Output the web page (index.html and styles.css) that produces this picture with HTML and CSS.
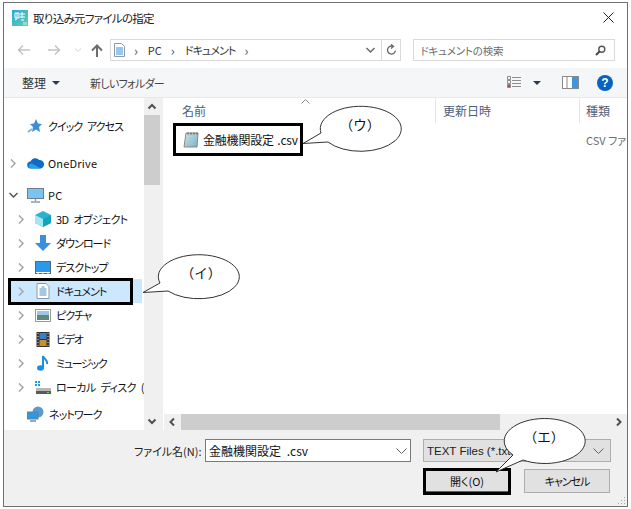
FILE: index.html
```html
<!DOCTYPE html>
<html lang="ja">
<head>
<meta charset="utf-8">
<title>取り込み元ファイルの指定</title>
<link rel="stylesheet" href="styles.css">
</head>
<body>
<div class="window">
  <div class="titlebar">
    <svg class="app-icon" width="16" height="16" viewBox="0 0 16 16"><defs><linearGradient id="ag" x1="0" y1="0" x2="1" y2="1"><stop offset="0" stop-color="#2aa7d8"/><stop offset="1" stop-color="#5fd0b0"/></linearGradient></defs><rect width="16" height="16" fill="url(#ag)"/><path d="M3 3h4v5H3zM5 3v5M8 4h5M8 7h5M10 2v6M3 10l2-1M9 10h3" stroke="#fff" stroke-width="1" fill="none"/><rect x="11" y="12" width="4" height="3" fill="#8fe0c8"/></svg>
    <span class="title-text">取り込み元ファイルの指定</span>
    <svg class="close" width="11" height="11" viewBox="0 0 11 11"><path d="M.5.5l10 10M10.5.5l-10 10" stroke="#222" fill="none"/></svg>
  </div>
  <div class="navrow">
    <svg class="nav" width="14" height="12" viewBox="0 0 14 12"><path d="M13 6H2M6 1.500L1.500 6 6 10.500" stroke="#c4c4c4" stroke-width="1.500" fill="none"/></svg>
    <svg class="nav" width="14" height="12" viewBox="0 0 14 12"><path d="M1 6h11M8 1.500L12.500 6 8 10.500" stroke="#c4c4c4" stroke-width="1.500" fill="none"/></svg>
    <svg class="nav drop" width="8" height="6" viewBox="0 0 8 6"><path d="M1 1.500l3 3 3-3" stroke="#d0d0d0" fill="none"/></svg>
    <svg class="nav up" width="12" height="13" viewBox="0 0 12 13"><path d="M6 13V2M1 6.500L6 1.500l5 5" stroke="#6d6d6d" stroke-width="2" fill="none"/></svg>
    <div class="address">
      <svg class="doc-small" width="11" height="14" viewBox="0 0 11 14"><path d="M.5.500h7l3 3v10H.500z" fill="#fff" stroke="#8a9aa8"/><path d="M2 5h7M2 7h7M2 9h7M2 11h7" stroke="#2f8fd8"/></svg>
      <span class="crumb-sep">›</span><span class="crumb">PC</span><span class="crumb-sep">›</span><span class="crumb kana">ドキュメント</span><span class="crumb-sep">›</span>
      <span class="spacer"></span>
      <svg width="9" height="6" viewBox="0 0 9 6"><path d="M.5 1l4 4 4-4" stroke="#666" stroke-width="1.400" fill="none"/></svg>
      <span class="addr-div"></span>
      <svg class="refresh" width="11" height="12" viewBox="0 0 11 12"><path d="M9.500 6.500a4 4 0 1 1-2.500-4.200M5 .5l2.500 1.800L5 4.500" stroke="#666" stroke-width="1.300" fill="none"/></svg>
    </div>
    <div class="search">
      <span class="search-text">ドキュメントの検索</span>
      <svg width="11" height="11" viewBox="0 0 11 11"><circle cx="6.800" cy="4.200" r="3" fill="none" stroke="#555" stroke-width="1.400"/><path d="M4.500 6.500L1 10" stroke="#444" stroke-width="2"/></svg>
    </div>
  </div>
  <div class="toolbar">
    <span class="tool-label org">整理</span>
    <span class="caret"></span>
    <span class="tool-label newfolder">新しいフォルダー</span>
    <span class="spacer"></span>
    <svg class="views" width="15" height="13" viewBox="0 0 15 13"><path d="M.5.500h3v3h-3zM.5 4.500h3v3h-3zM.5 8.500h3v3h-3z" fill="none" stroke="#8a8a8a"/><path d="M5 1.500h9M5 4.500h9M5 7.500h9M5 10.500h9" stroke="#8f8f8f"/><rect x="1" y="9" width="2" height="2" fill="#d04040"/></svg>
    <span class="caret dark"></span>
    <svg class="pane" width="17" height="13" viewBox="0 0 17 13"><rect x=".5" y=".5" width="16" height="12" fill="#fff" stroke="#8a8a8a"/><rect x="10" y="1" width="6" height="11" fill="#3f96e0"/><path d="M5 1v11" stroke="#8a8a8a"/></svg>
    <span class="help">?</span>
  </div>
  <div class="main">
    <div class="sidebar">
      <div class="tree">
        <div class="row quick"><span class="chev none"></span>
          <svg class="icon" width="16" height="16" viewBox="0 0 16 16"><path d="M9 1l2 4.500 4 .5-3 3 1 5-4-2.500L5 14l1-5-3-3 4-.5z" fill="#3b8fd8"/><path d="M1 14l4-3" stroke="#7ab8e8" stroke-width="2"/></svg>
          <span>クイック アクセス</span></div>
        <div class="row onedrive"><svg class="chev" width="7" height="9" viewBox="0 0 7 9"><path d="M1 .5l4 4-4 4" stroke="#a6a6a6" stroke-width="1.500" fill="none"/></svg>
          <svg class="icon" width="17" height="12" viewBox="0 0 17 12"><path d="M4 11.500a3.500 3.500 0 0 1-.5-7A5 5 0 0 1 12 3a3.500 3.500 0 0 1 1.500 8.500z" fill="#0f6cc4"/><path d="M4 11.500a2.500 2.500 0 0 1 1-5l9 5z" fill="#2a9fe8"/></svg>
          <span class="latin">OneDrive</span></div>
        <div class="row pc"><svg class="chev" width="9" height="7" viewBox="0 0 9 7"><path d="M.5 1l4 4 4-4" stroke="#555" stroke-width="1.500" fill="none"/></svg>
          <svg class="icon" width="17" height="15" viewBox="0 0 17 15"><rect x=".5" y=".5" width="16" height="10" fill="#7cc4f0" stroke="#6d7f8f"/><path d="M8.500 11v2M4 14h9" stroke="#8a9aa8" stroke-width="1.500"/></svg>
          <span class="latin">PC</span></div>
        <div class="row sub"><svg class="chev" width="7" height="9" viewBox="0 0 7 9"><path d="M1 .5l4 4-4 4" stroke="#a6a6a6" stroke-width="1.500" fill="none"/></svg>
          <svg class="icon" width="16" height="16" viewBox="0 0 16 16"><path d="M8 0l8 4v8l-8 4-8-4V4z" fill="#28b4d0"/><path d="M0 4l8 4v8l-8-4z" fill="#a6e6ee"/><path d="M8 8l8-4v8l-8 4z" fill="#1aa0c0"/></svg>
          <span class="mid">3D オブジェクト</span></div>
        <div class="row sub"><svg class="chev" width="7" height="9" viewBox="0 0 7 9"><path d="M1 .5l4 4-4 4" stroke="#a6a6a6" stroke-width="1.500" fill="none"/></svg>
          <svg class="icon" width="16" height="16" viewBox="0 0 16 16"><path d="M5 0h6v8h5l-8 8-8-8h5z" fill="#3a8fdc"/></svg>
          <span>ダウンロード</span></div>
        <div class="row sub"><svg class="chev" width="7" height="9" viewBox="0 0 7 9"><path d="M1 .5l4 4-4 4" stroke="#a6a6a6" stroke-width="1.500" fill="none"/></svg>
          <svg class="icon" width="16" height="13" viewBox="0 0 16 13"><rect width="16" height="11" fill="#2a9ae8"/><rect x=".5" y=".5" width="15" height="12" fill="none" stroke="#4a6a88"/><path d="M2 12h2M7 12h2M12 12h2" stroke="#fff"/></svg>
          <span>デスクトップ</span></div>
        <div class="row sub selected"><svg class="chev" width="7" height="9" viewBox="0 0 7 9"><path d="M1 .5l4 4-4 4" stroke="#a6a6a6" stroke-width="1.500" fill="none"/></svg>
          <svg class="icon" width="13" height="16" viewBox="0 0 13 16"><path d="M.5.500h9l3 3v12H.500z" fill="#fff" stroke="#8a9aa8"/><path d="M3 6h7M3 8h7M3 10h7M3 12h7M5 4h3" stroke="#4a8fc8"/></svg>
          <span>ドキュメント</span></div>
        <div class="row sub"><svg class="chev" width="7" height="9" viewBox="0 0 7 9"><path d="M1 .5l4 4-4 4" stroke="#a6a6a6" stroke-width="1.500" fill="none"/></svg>
          <svg class="icon" width="16" height="13" viewBox="0 0 16 13"><rect x=".5" y=".5" width="15" height="12" fill="#fff" stroke="#9a9a9a"/><rect x="2" y="2" width="12" height="4" fill="#9cc8e8"/><rect x="2" y="6" width="12" height="5" fill="#5f8a78"/></svg>
          <span>ピクチャ</span></div>
        <div class="row sub"><svg class="chev" width="7" height="9" viewBox="0 0 7 9"><path d="M1 .5l4 4-4 4" stroke="#a6a6a6" stroke-width="1.500" fill="none"/></svg>
          <svg class="icon video" width="13" height="15" viewBox="0 0 13 15"><rect width="13" height="15" fill="#333"/><rect x="3" y="1" width="7" height="6" fill="#3a80c8"/><rect x="3" y="8" width="7" height="6" fill="#c8902a"/><path d="M1 1.500h1M1 4.500h1M1 7.500h1M1 10.500h1M1 13.500h1M11 1.500h1M11 4.500h1M11 7.500h1M11 10.500h1M11 13.500h1" stroke="#ddd"/></svg>
          <span class="tight">ビデオ</span></div>
        <div class="row sub"><svg class="chev" width="7" height="9" viewBox="0 0 7 9"><path d="M1 .5l4 4-4 4" stroke="#a6a6a6" stroke-width="1.500" fill="none"/></svg>
          <svg class="icon music" width="13" height="16" viewBox="0 0 13 16"><ellipse cx="4" cy="13" rx="3.500" ry="2.800" fill="#1a90e0"/><path d="M6.500 13V1c1 3 5 4 4 8" stroke="#1a90e0" stroke-width="2" fill="none"/></svg>
          <span class="tight">ミュージック</span></div>
        <div class="row sub"><svg class="chev" width="7" height="9" viewBox="0 0 7 9"><path d="M1 .5l4 4-4 4" stroke="#a6a6a6" stroke-width="1.500" fill="none"/></svg>
          <svg class="icon" width="16" height="14" viewBox="0 0 16 14"><path d="M0 1h2v2H0zM3 1h2v2H3zM0 4h2v2H0zM3 4h2v2H3z" fill="#1a9ae8"/><rect x="1" y="8" width="15" height="6" fill="#b8b8b8"/><rect x="1" y="11" width="15" height="3" fill="#5a5a5a"/><rect x="12" y="12" width="2" height="1" fill="#5fe05f"/></svg>
          <span class="mid clip">ローカル ディスク (C:)</span></div>
        <div class="row network"><span class="chev none"></span>
          <svg class="icon" width="17" height="16" viewBox="0 0 17 16"><circle cx="11" cy="6" r="5.500" fill="#5a9ad0"/><rect x="0" y="6" width="11" height="7" fill="#2a9ae8" stroke="#6d7f8f"/><path d="M3 15h6" stroke="#7a8a98" stroke-width="1.500"/></svg>
          <span>ネットワーク</span></div>
      </div>
      <div class="vscroll">
        <svg class="sb-btn" width="16" height="17" viewBox="0 0 16 17"><path d="M4.500 10.500L8 7l3.500 3.500" stroke="#505050" stroke-width="2" fill="none"/></svg>
        <div class="vthumb"></div>
        <span class="spacer"></span>
        <svg class="sb-btn" width="16" height="17" viewBox="0 0 16 17"><path d="M4.500 6.500L8 10l3.500-3.500" stroke="#505050" stroke-width="2" fill="none"/></svg>
      </div>
    </div>
    <div class="content">
      <div class="files">
        <div class="header">
          <span class="col-name">名前<svg class="sort" width="9" height="5" viewBox="0 0 9 5"><path d="M.5 4.500l4-4 4 4" stroke="#8a8a8a" fill="none"/></svg></span>
          <span class="col-date">更新日時</span>
          <span class="col-type">種類</span>
        </div>
        <div class="file-row">
          <span class="col-name file-name">
            <svg width="16" height="16" viewBox="0 0 16 16"><defs><linearGradient id="fg" x1="0" y1="0" x2="1" y2="1"><stop offset="0" stop-color="#d8e8ec"/><stop offset="1" stop-color="#6fb0c8"/></linearGradient></defs><path d="M3 1h12l-1 14H1z" fill="url(#fg)" stroke="#8f8a78"/><path d="M5 3h8M4.500 6h8M4 9h8M3.500 12h8" stroke="#9ec6d4"/><path d="M5 .5v2M8 .5v2M11 .5v2M14 .5v2" stroke="#555"/></svg>
            <span class="fname">金融機関設定 .csv</span>
          </span>
          <span class="col-date"></span>
          <span class="col-type file-type">CSV ファイル</span>
        </div>
      </div>
      <div class="hscroll">
        <svg class="sb-btn" width="17" height="16" viewBox="0 0 17 16"><path d="M10 4.500L6.500 8l3.500 3.500" stroke="#505050" stroke-width="2" fill="none"/></svg>
        <div class="hthumb"></div>
        <span class="spacer"></span>
        <svg class="sb-btn" width="17" height="16" viewBox="0 0 17 16"><path d="M7 4.500L10.500 8 7 11.500" stroke="#505050" stroke-width="2" fill="none"/></svg>
      </div>
    </div>
  </div>
  <div class="footer">
    <div class="foot-line">
      <span class="fn-label">ファイル名(N):</span>
      <div class="fn-input"><span>金融機関設定 .csv</span><svg width="11" height="6" viewBox="0 0 11 6"><path d="M.5.500l5 5 5-5" stroke="#606060" fill="none"/></svg></div>
      <div class="type-select"><span>TEXT Files (*.txt;*.csv)</span><svg width="11" height="6" viewBox="0 0 11 6"><path d="M.5.500l5 5 5-5" stroke="#606060" fill="none"/></svg></div>
    </div>
    <div class="foot-buttons">
      <button class="btn primary">開く(O)</button>
      <button class="btn cancel">キャンセル</button>
    </div>
    <svg class="grip" width="9" height="9" viewBox="0 0 9 9"><path d="M7 1h1v1H7zM4 4h1v1H4zM7 4h1v1H7zM1 7h1v1H1zM4 7h1v1H4zM7 7h1v1H7z" fill="#a8a8a8"/></svg>
  </div>
</div>
<svg class="annotations" width="631" height="509" viewBox="0 0 631 509">
  <g class="mark"><rect x="9.500" y="279.500" width="122" height="24"/><rect x="174.500" y="124.500" width="127" height="30"/><rect x="424.500" y="469.500" width="85" height="24"/></g>
  <g class="bubble">
    <path d="M321 133A40.500 22.500 0 1 1 328 142L303 143.500Z"/>
    <path d="M160 283A40.500 22 0 1 1 168 291L143 292.500Z"/>
    <path d="M513 455A40.500 22.500 0 1 1 523 460L496 472Z"/>
  </g>
  <g class="bubble-text">
    <text x="360" y="130">（ウ）</text>
    <text x="201" y="278">（イ）</text>
    <text x="544" y="442">（エ）</text>
  </g>
</svg>
</body>
</html>
```
FILE: styles.css
```css
* { box-sizing: border-box; }
html, body { margin: 0; padding: 0; background: #fff; }
body {
  width: 631px;
  height: 509px;
  overflow: hidden;
  position: relative;
  font-family: "Noto Sans CJK JP", "Liberation Sans", sans-serif;
  font-feature-settings: "palt";
  font-size: 11px;
  color: #111;
}
.window {
  margin: 2px 0 0 3px;
  width: 625px;
  height: 505px;
  border: 1px solid #707070;
  display: flex;
  flex-direction: column;
  background: #fff;
  overflow: hidden;
}
.spacer { flex: 1; }
.titlebar {
  height: 29px;
  flex: none;
  display: flex;
  align-items: center;
  padding: 0 13px 0 8px;
}
.title-text { margin-left: 5px; font-size: 11.500px; letter-spacing: -.7px; flex: 1; color: #222; }
.navrow {
  height: 36px;
  flex: none;
  display: flex;
  align-items: center;
  padding: 0 12px 0 13px;
}
.nav { margin-right: 16px; }
.nav.drop { margin-right: 9px; margin-left: -3px; }
.nav.up { margin-right: 7px; }
.address {
  width: 292px;
  height: 22px;
  border: 1px solid #d9d9d9;
  display: flex;
  align-items: center;
  padding-left: 3px;
  color: #333;
}
.crumb { font-size: 11px; }
.crumb.kana { letter-spacing: -.9px; }
.crumb-sep { color: #555; margin: 0 10px 0 9px; font-size: 13px; line-height: 1; }
.addr-div { width: 1px; height: 20px; background: #d9d9d9; margin: 0 4px 0 6px; }
.refresh { margin-right: 3px; }
.search {
  margin-left: 12px;
  width: 202px;
  height: 22px;
  border: 1px solid #d9d9d9;
  display: flex;
  align-items: center;
  justify-content: space-between;
  padding: 0 8px 0 6px;
}
.search-text { color: #6d6d6d; font-size: 10.500px; letter-spacing: -.2px; }
.toolbar {
  height: 30px;
  flex: none;
  background: #f5f6f7;
  border-bottom: 1px solid #e8e8e8;
  display: flex;
  align-items: center;
  padding: 0 14px 0 18px;
  color: #333;
}
.tool-label { font-size: 11px; }
.tool-label.org { font-size: 12px; }
.newfolder { margin-left: 30px; color: #444; letter-spacing: -.7px; }
.caret {
  width: 0;
  height: 0;
  border-left: 4px solid transparent;
  border-right: 4px solid transparent;
  border-top: 4px solid #2a3a50;
  margin-left: 6px;
}
.views { margin-right: 11px; }
.caret.dark { margin: 0 21px 0 0; }
.pane { margin-right: 18px; }
.help {
  width: 16px;
  height: 16px;
  border-radius: 50%;
  background: #0a62c0;
  color: #fff;
  font: bold 12px/16px "Liberation Sans", sans-serif;
  text-align: center;
}
.main { height: 332px; flex: none; display: flex; }
.sidebar { width: 159px; flex: none; display: flex; border-right: 3px solid #f0f0f0; }
.tree { width: 140px; flex: none; padding-top: 16px; overflow: hidden; }
.row {
  height: 24px;
  display: flex;
  align-items: center;
  white-space: nowrap;
  font-size: 11px;
  padding-left: 1px;
  margin-left: 4px;
  color: #111;
}
.row > span { letter-spacing: -.95px; word-spacing: 3px; }
.row > span.latin { letter-spacing: .2px; }
.row > span.mid { letter-spacing: -.6px; }
.row > span.tight { letter-spacing: -1.300px; }
.row .chev { width: 9px; flex: none; }
.row .chev.none { display: inline-block; height: 1px; }
.row .icon { flex: none; margin: 0 4px 0 9px; }
.row.quick span:last-child, .row.network span:last-child { margin-left: 1px; }
.row.sub { padding-left: 9px; }
.row.sub .icon { width: 16px; margin: 0 5px 0 9px; }
.row.onedrive { margin-top: 13px; }
.row.pc { margin-top: 8px; }
.row.network { margin-top: 3px; }
.row.selected { background: #cce8ff; margin-right: 2px; }
.clip { overflow: hidden; }
.vscroll {
  width: 16px;
  flex: none;
  background: #f0f0f0;
  display: flex;
  flex-direction: column;
}
.vthumb { height: 70px; background: #cdcdcd; }
.content { flex: 1; min-width: 0; display: flex; flex-direction: column; padding-left: 1px; }
.files { flex: 1; overflow: hidden; }
.header { height: 25px; display: flex; color: #4c607a; font-size: 12px; }
.header span { display: flex; align-items: center; border-right: 1px solid #e5e5e5; }
.col-name { width: 272px; flex: none; padding-left: 18px; position: relative; }
.col-date { width: 144px; flex: none; padding-left: 7px; }
.col-type { width: 60px; flex: none; padding-left: 6px; white-space: nowrap; }
.sort { position: absolute; left: 137px; top: 1px; }
.file-row { display: flex; height: 31px; margin-top: 1px; align-items: center; }
.file-name { display: flex; align-items: center; padding-left: 19px; gap: 4px; font-size: 11px; }
.fname { font-size: 12px; letter-spacing: -.2px; word-spacing: 1px; }
.file-type { color: #6d6d6d; font-size: 11px; }
.hscroll { height: 16px; flex: none; background: #f0f0f0; display: flex; }
.hthumb { width: 319px; background: #cdcdcd; }
.footer {
  flex: 1;
  background: #f0f0f0;
  padding: 9px 16px 0 130px;
  position: relative;
}
.foot-line { display: flex; align-items: center; height: 23px; }
.fn-label { width: 71px; flex: none; color: #222; white-space: nowrap; }
.fn-input {
  width: 206px;
  flex: none;
  height: 23px;
  background: #fff;
  border: 1px solid #7a7a7a;
  display: flex;
  align-items: center;
  justify-content: space-between;
  padding: 0 3px 0 3px;
  font-size: 12px;
  word-spacing: 3px;
}
.type-select {
  margin-left: 12px;
  width: 188px;
  flex: none;
  height: 23px;
  background: #e1e1e1;
  border: 1px solid #adadad;
  display: flex;
  align-items: center;
  justify-content: space-between;
  padding: 0 6px 0 3px;
  font: 11.500px "Liberation Sans", sans-serif;
  color: #222;
  white-space: nowrap;
}
.foot-buttons { display: flex; justify-content: flex-end; gap: 14px; margin-top: 7px; padding-right: 1px; }
.btn {
  width: 86px;
  height: 24px;
  background: #e1e1e1;
  border: 1px solid #adadad;
  font-family: inherit;
  font-feature-settings: inherit;
  font-size: 11px;
  color: #111;
  padding: 0;
}
.btn.cancel { letter-spacing: -1px; }
.btn.primary { border-bottom: 2px solid #0078d7; }
.grip { position: absolute; right: 1px; bottom: 1px; }
.annotations { position: absolute; left: 0; top: 0; pointer-events: none; }
.mark rect { fill: none; stroke: #000; stroke-width: 3; }
.bubble path { fill: #fff; stroke: #333; stroke-width: 1; }
.bubble-text text {
  font-family: "Noto Sans CJK JP", sans-serif;
  font-feature-settings: normal;
  font-size: 13.500px;
  text-anchor: middle;
  fill: #111;
}
```
